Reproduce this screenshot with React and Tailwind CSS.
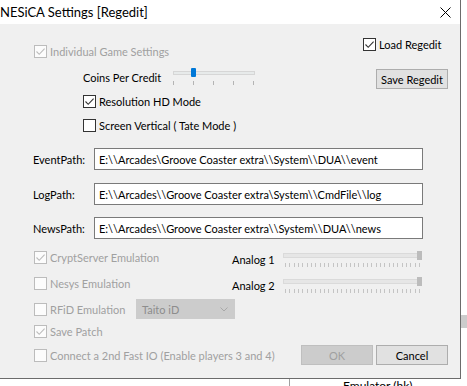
import React from 'react';

const Box = ({ checked, disabled }) => (
  <span
    className={
      disabled
        ? 'flex h-[13px] w-[13px] shrink-0 items-center justify-center border border-[#bcbcbc] bg-[#fcfcfc]'
        : 'flex h-[13px] w-[13px] shrink-0 items-center justify-center border border-[#333333] bg-white'
    }
  >
    {checked && (
      <svg width="11" height="11" viewBox="0 0 11 11">
        <path
          d="M1.5 5.5 L4.2 8.3 L9.6 2.6"
          fill="none"
          stroke={disabled ? '#bcbcbc' : '#333333'}
          strokeWidth="1.1"
        />
      </svg>
    )}
  </span>
);

const CheckRow = ({ label, checked, disabled, className = '' }) => (
  <div className={`flex h-[13px] shrink-0 items-center gap-[3px] ${className}`}>
    <Box checked={checked} disabled={disabled} />
    <span className={disabled ? 'whitespace-nowrap text-[#a0a0a0]' : 'whitespace-nowrap text-black'}>{label}</span>
  </div>
);

const Button = ({ label, disabled, className = '' }) => (
  <div
    className={
      disabled
        ? `flex h-[20px] w-[72px] shrink-0 items-center justify-center whitespace-nowrap border border-[#bfbfbf] bg-[#cccccc] text-[#a0a0a0] ${className}`
        : `flex h-[20px] w-[72px] shrink-0 items-center justify-center whitespace-nowrap border border-[#adadad] bg-[#e1e1e1] text-black ${className}`
    }
  >
    {label}
  </div>
);

const PathRow = ({ label, value, className = '' }) => (
  <div className={`flex items-center pl-[33px] ${className}`}>
    <span className="w-[61px] shrink-0 whitespace-nowrap">{label}</span>
    <div className="flex h-[22px] w-[329px] shrink-0 items-center overflow-hidden whitespace-nowrap border border-[#7a7a7a] bg-white px-[4px]">
      {value}
    </div>
  </div>
);

// small slider, coins per credit
const CoinsSlider = () => (
  <div className="relative h-[18px] w-[82px] shrink-0">
    <div className="absolute left-0 right-0 top-[3px] h-[4px] border border-[#d6d6d6] bg-[#e7eaea]" />
    <div className="absolute left-[18px] top-0 h-[9px] w-[5px] rounded-[1px] bg-[#0078d7]" />
    <svg className="absolute left-0 top-[13px]" width="82" height="4">
      {[0.5, 20.5, 40.5, 60.5, 80.5].map((x) => (
        <line key={x} x1={x} y1="0" x2={x} y2="4" stroke="#b4b4b4" />
      ))}
    </svg>
  </div>
);

// disabled analog slider, thumb at max
const AnalogSlider = () => {
  const ticks = [];
  for (let i = 0; i <= 31; i++) ticks.push(Math.round(2 + (i * 134) / 31) + 0.5);
  return (
    <div className="relative h-[18px] w-[139px] shrink-0">
      <div className="absolute left-0 right-0 top-[3px] h-[5px] border border-[#dadada] bg-[#e6e6e6]" />
      <div className="absolute right-0 top-[1px] h-[9px] w-[5px] bg-[#bcbcbc]" />
      <svg className="absolute left-0 top-[13px]" width="139" height="4">
        {ticks.map((x, i) => (
          <line key={i} x1={x} y1="0" x2={x} y2="4" stroke="#c4c4c4" />
        ))}
      </svg>
    </div>
  );
};

const App = () => {
  return (
    <div className="relative h-[386px] w-[467px] overflow-hidden bg-white font-['Lato',sans-serif] text-[11px] leading-none text-black">
      {/* window behind the dialog */}
      <div className="absolute left-[461px] top-[315px] h-[13px] w-[6px] bg-[#cccccc]" />
      <div className="absolute left-[289px] top-[379px] h-[7px] w-px bg-[#a0a0a0]" />
      <div className="absolute left-[343px] top-[380px] whitespace-nowrap text-[12px]">Emulator (hk)</div>

      {/* dialog */}
      <div className="absolute left-0 top-0 flex h-[379px] w-[461px] flex-col border-b border-r border-[#6b6b6b]">
        <div className="flex h-[24px] items-center justify-between bg-white pr-[9px]">
          <span className="whitespace-nowrap text-[13px]">NESiCA Settings [Regedit]</span>
          <svg width="11" height="11" viewBox="0 0 11 11">
            <path d="M0.5 0.5 L10.5 10.5 M10.5 0.5 L0.5 10.5" stroke="#000" strokeWidth="1" />
          </svg>
        </div>

        <div className="flex flex-1 flex-col bg-[#f0f0f0]">
          {/* top part */}
          <div className="flex justify-between">
            <div className="flex flex-col pl-[34px] pt-[21px]">
              <CheckRow label="Individual Game Settings" checked disabled />
              <div className="mt-[10px] flex h-[18px] pl-[49px]">
                <span className="w-[90px] shrink-0 whitespace-nowrap pt-[4px]">Coins Per Credit</span>
                <CoinsSlider />
              </div>
              <CheckRow label="Resolution HD Mode" checked className="mt-[9px] pl-[49px]" />
              <CheckRow label="Screen Vertical ( Tate Mode )" className="mt-[11px] pl-[49px]" />
            </div>
            <div className="flex w-[97px] flex-col items-start pr-[12px] pt-[14px]">
              <CheckRow label="Load Regedit" checked />
              <Button label="Save Regedit" className="ml-[13px] mt-[18px]" />
            </div>
          </div>

          {/* paths */}
          <PathRow label="EventPath:" value="E:\\Arcades\Groove Coaster extra\\System\\DUA\\event" className="mt-[16px]" />
          <PathRow label="LogPath:" value="E:\\Arcades\\Groove Coaster extra\System\\CmdFile\\log" className="mt-[13px]" />
          <PathRow label="NewsPath:" value="E:\\Arcades\\Groove Coaster extra\\System\\DUA\\news" className="mt-[12px]" />

          {/* bottom part */}
          <div className="mt-[11px] flex">
            <div className="flex w-[232px] shrink-0 flex-col pl-[34px] pt-[1px]">
              <CheckRow label="CryptServer Emulation" checked disabled />
              <CheckRow label="Nesys Emulation" disabled className="mt-[13px]" />
              <div className="mt-[9px] flex h-[20px] items-center">
                <CheckRow label="RFiD Emulation" disabled className="w-[102px]" />
                <div className="flex h-[20px] w-[99px] shrink-0 items-center justify-between border border-[#cccccc] bg-[#cccccc] pl-[5px] pr-[6px] text-[#8d8d8d]">
                  <span>Taito iD</span>
                  <svg width="8" height="5" viewBox="0 0 8 5">
                    <path d="M0.5 0.5 L4 4 L7.5 0.5" fill="none" stroke="#a8a8a8" />
                  </svg>
                </div>
              </div>
              <CheckRow label="Save Patch" checked disabled className="mt-[6px]" />
              <CheckRow label="Connect a 2nd Fast IO (Enable players 3 and 4)" disabled className="mt-[11px]" />
            </div>
            <div className="flex flex-1 flex-col pr-[12px]">
              <div className="flex h-[18px]">
                <span className="w-[51px] shrink-0 whitespace-nowrap pt-[4px]">Analog 1</span>
                <AnalogSlider />
              </div>
              <div className="mt-[8px] flex h-[18px]">
                <span className="w-[51px] shrink-0 whitespace-nowrap pt-[4px]">Analog 2</span>
                <AnalogSlider />
              </div>
              <div className="mt-[51px] flex justify-end gap-[3px]">
                <Button label="OK" disabled />
                <Button label="Cancel" />
              </div>
            </div>
          </div>
        </div>
      </div>
    </div>
  );
};

export default App;
